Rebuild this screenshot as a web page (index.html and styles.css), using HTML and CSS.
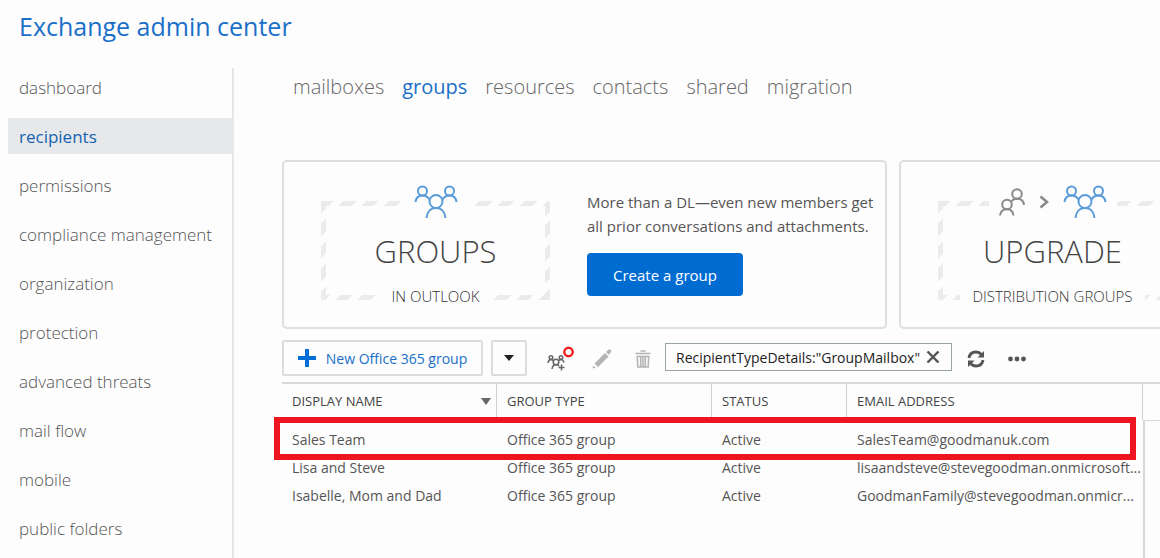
FILE: index.html
```html
<!DOCTYPE html>
<html lang="en">
  <head>
    <meta charset="utf-8">
    <title>Exchange admin center</title>
    <link rel="stylesheet" href="styles.css">
  </head>
  <body>
    <svg class="defs" width="0" height="0">
      <symbol id="people" viewBox="0 0 44 34">
        <g fill="none" stroke="currentColor" stroke-width="2">
          <circle cx="8.500" cy="6" r="4.500"/>
          <circle cx="35.500" cy="6" r="4.500"/>
          <circle cx="22" cy="16.500" r="6.500"/>
          <path d="M1.500 17c.5-4 3-6.500 7-6.500 3 0 5.500 1.500 7 4M42.500 17c-.5-4-3-6.500-7-6.500-3 0-5.500 1.500-7 4M12.500 33c.5-6 4-10 9.500-10s9 4 9.500 10"/>
        </g>
      </symbol>
      <symbol id="pair" viewBox="0 0 26 28">
        <g fill="none" stroke="currentColor" stroke-width="2">
          <circle cx="18" cy="6" r="4.800"/>
          <circle cx="8" cy="16.500" r="4.800"/>
          <path d="M12.500 13c1.500-1.500 3-2.200 5.500-2.200 4 0 6.500 2 7 6M1 27.500c.5-4 3-6.200 7-6.200s6 2.200 6.500 6.200"/>
        </g>
      </symbol>
    </svg>

    <h1 class="title">Exchange admin center</h1>
    <div class="page">
      <nav class="sidebar">
        <a href="#">dashboard</a>
        <a href="#" class="selected">recipients</a>
        <a href="#">permissions</a>
        <a href="#">compliance management</a>
        <a href="#">organization</a>
        <a href="#">protection</a>
        <a href="#">advanced threats</a>
        <a href="#">mail flow</a>
        <a href="#">mobile</a>
        <a href="#">public folders</a>
      </nav>

      <div class="main">
        <nav class="tabs">
          <a href="#">mailboxes</a>
          <a href="#" class="selected">groups</a>
          <a href="#">resources</a>
          <a href="#">contacts</a>
          <a href="#">shared</a>
          <a href="#">migration</a>
        </nav>

        <div class="cards">
          <div class="card">
            <div class="stamp">
              <div class="stamp-body">
                <div class="stamp-icons">
                  <svg width="44" height="34"><use href="#people"/></svg>
                </div>
                <h2>GROUPS</h2>
                <p class="stamp-label">IN OUTLOOK</p>
              </div>
            </div>
            <div class="card-text">
              <p>More than a DL&mdash;even new members get<br>all prior conversations and attachments.</p>
              <button class="create">Create a group</button>
            </div>
          </div>
          <div class="card">
            <div class="stamp">
              <div class="stamp-body">
                <div class="stamp-icons">
                  <svg class="gray" width="26" height="28"><use href="#pair"/></svg>
                  <svg class="gray" width="10" height="14" viewBox="0 0 10 14"><path d="M1.500 1.500L8 7l-6.500 5.500" fill="none" stroke="currentColor" stroke-width="2.500"/></svg>
                  <svg width="44" height="34"><use href="#people"/></svg>
                </div>
                <h2>UPGRADE</h2>
                <p class="stamp-label">DISTRIBUTION GROUPS</p>
              </div>
            </div>
          </div>
        </div>

        <div class="toolbar">
          <button class="new">
            <svg width="18" height="18" viewBox="0 0 18 18"><path d="M9 0v18M0 9h18" stroke="#0070d8" stroke-width="4"/></svg>
            New Office 365 group
          </button>
          <button class="more-new" aria-label="More group types">
            <svg width="10" height="6" viewBox="0 0 10 6"><path d="M0 0h10L5 6z" fill="#222"/></svg>
          </button>
          <button class="icon" aria-label="Upgrade">
            <svg width="28" height="26" viewBox="0 0 28 26">
              <g fill="none" stroke="#666" stroke-width="1.500">
                <circle cx="4" cy="11.500" r="1.800"/>
                <circle cx="14" cy="11.500" r="1.800"/>
                <circle cx="9" cy="16" r="2.800"/>
                <path d="M1 17c.3-2 1.200-3.500 3-3.500l2 .8M12 14.300l2-.8c1.500 0 2.500 1.300 3 3M5 23c.3-3 1.500-4.200 4-4.200 1.500 0 2.500.4 3 1.200M14.500 18.500v6M11.500 21.500h6"/>
              </g>
              <circle cx="21.500" cy="6" r="4.200" fill="#fff" stroke="#f01e1e" stroke-width="2.400"/>
            </svg>
          </button>
          <button class="icon" aria-label="Edit">
            <svg width="20" height="20" viewBox="0 0 20 20" fill="#b4b4b4"><path d="M.5 19.500l.8-3 2.200 2.200zM2.500 14.500L13 4l3.500 3.500L6 18zM14 3l2-2c1-1 2-.7 2.700 0s1 1.700 0 2.700l-2 2z"/></svg>
          </button>
          <button class="icon" aria-label="Delete">
            <svg width="16" height="18" viewBox="0 0 16 18"><g fill="none" stroke="#b4b4b4" stroke-width="1.600"><path d="M.5 3.500h15M5.500 1h5M2.300 6.500h11.400l-.5 10.500H2.800zM5.700 7v10M8 7v10M10.300 7v10"/></g></svg>
          </button>
          <div class="search">
            <input type="text" aria-label="Search" value='RecipientTypeDetails:"GroupMailbox"'>
            <button aria-label="Clear search">
              <svg width="14" height="12" viewBox="0 0 14 12"><path d="M1.500.5l11 11M12.500.5l-11 11" stroke="#555" stroke-width="2.400"/></svg>
            </button>
          </div>
          <button class="icon" aria-label="Refresh">
            <svg width="18" height="18" viewBox="0 0 18 18">
              <path d="M2 8c.5-3.500 3-6 7-6 2.500 0 4 .8 5.500 2.500M16 10c-.5 3.500-3 6-7 6-2.500 0-4-.8-5.500-2.500" fill="none" stroke="#555" stroke-width="2.800"/>
              <path d="M17 1v6.500h-6.500zM1 17v-6.500h6.500z" fill="#555"/>
            </svg>
          </button>
          <button class="icon" aria-label="More">
            <svg width="18" height="6" viewBox="0 0 18 6" fill="#555"><circle cx="2.500" cy="3" r="2.400"/><circle cx="9" cy="3" r="2.400"/><circle cx="15.500" cy="3" r="2.400"/></svg>
          </button>
        </div>

        <div class="results">
          <table class="list">
            <thead>
              <tr>
                <th class="name">DISPLAY NAME <svg width="10" height="7" viewBox="0 0 10 7"><path d="M0 0h10L5 7z" fill="#666"/></svg></th>
                <th class="type">GROUP TYPE</th>
                <th class="status">STATUS</th>
                <th>EMAIL ADDRESS</th>
              </tr>
            </thead>
            <tbody>
              <tr><td>Sales Team</td><td>Office 365 group</td><td>Active</td><td>SalesTeam@goodmanuk.com</td></tr>
              <tr><td>Lisa and Steve</td><td>Office 365 group</td><td>Active</td><td>lisaandsteve@stevegoodman.onmicrosoft...</td></tr>
              <tr><td>Isabelle, Mom and Dad</td><td>Office 365 group</td><td>Active</td><td>GoodmanFamily@stevegoodman.onmicr...</td></tr>
            </tbody>
          </table>
          <div class="details"></div>
          <div class="highlight"></div>
        </div>
      </div>
    </div>
  </body>
</html>
```
FILE: styles.css
```css
* {
  box-sizing: border-box;
}

body {
  margin: 0;
  height: 100vh;
  display: flex;
  flex-direction: column;
  overflow: hidden;
  background-color: #fdfdfd;
  font-family: "Open Sans", "Noto Sans", sans-serif;
  font-size: 14px;
  color: #555;
}

h1, h2, p {
  margin: 0;
  font-weight: normal;
}

a {
  text-decoration: none;
  color: inherit;
}

button, input {
  font: inherit;
  color: inherit;
}

button {
  padding: 0;
  cursor: pointer;
}

svg {
  display: block;
}

.defs {
  position: absolute;
}

.title {
  flex: none;
  height: 68px;
  padding: 8px 19px;
  font-size: 25px;
  line-height: 36px;
  color: #1a6fc9;
}

.page {
  flex: 1;
  display: flex;
  min-height: 0;
}

/* left menu */
.sidebar {
  flex: none;
  width: 226px;
  margin-left: 8px;
  padding-top: 1px;
  border-right: 2px solid #e6e6e6;
  display: flex;
  flex-direction: column;
  gap: 13px;
}

.sidebar a {
  flex: none;
  padding: 2px 0 0 11px;
  margin-right: -2px;
  font-size: 17px;
  line-height: 34px;
  font-weight: 300;
}

.sidebar a.selected {
  background-color: #e7e8ea;
  color: #1463b0;
  font-weight: normal;
}

.main {
  flex: 1;
  min-width: 0;
  padding-left: 48px;
  display: flex;
  flex-direction: column;
}

.tabs {
  display: flex;
  gap: 18px;
  padding: 2px 0 0 11px;
  font-size: 20px;
  line-height: 34px;
  font-weight: 300;
  color: #666;
}

.tabs a.selected {
  color: #1a6fc9;
  font-weight: normal;
}

/* promo cards */
.cards {
  display: flex;
  gap: 12px;
  margin-top: 56px;
  overflow: hidden;
}

.card {
  flex: none;
  display: flex;
  gap: 37px;
  width: 605px;
  height: 169px;
  padding: 39px 0 0 37px;
  border: 2px solid #dedede;
  border-radius: 5px;
}

.stamp {
  width: 229px;
  height: 99px;
  padding: 5px;
  background: repeating-linear-gradient(135deg, #eaecec 0, #eaecec 9px, #fdfdfd 9px, #fdfdfd 16px);
}

.stamp-body {
  display: flex;
  flex-direction: column;
  align-items: center;
  height: 89px;
  background-color: #fdfdfd;
}

.stamp-icons {
  display: flex;
  align-items: center;
  gap: 14px;
  margin-top: -21px;
  padding: 0 10px;
  background-color: #fdfdfd;
  color: #5b9bd8;
}

.stamp-icons .gray {
  color: #888;
}

.stamp h2 {
  margin-top: 9px;
  font-size: 31px;
  line-height: 46px;
  font-weight: 300;
  color: #444;
}

.stamp-label {
  margin-top: 12px;
  padding: 0 12px;
  background-color: #fdfdfd;
  font-size: 15px;
  line-height: 20px;
  font-weight: 300;
  color: #333;
  white-space: nowrap;
}

.card-text {
  margin-top: -11px;
  font-size: 15px;
  line-height: 24px;
  font-weight: 300;
  white-space: nowrap;
}

.create {
  width: 156px;
  height: 43px;
  margin-top: 15px;
  border: none;
  border-radius: 4px;
  background-color: #006cd2;
  color: white;
  font-weight: normal;
}

/* toolbar */
.toolbar {
  display: flex;
  align-items: center;
  margin-top: 11px;
}

.new, .more-new {
  display: flex;
  align-items: center;
  justify-content: center;
  height: 36px;
  border: 2px solid #dadddf;
  border-radius: 2px;
  background-color: #fdfdfd;
}

.new {
  gap: 10px;
  width: 201px;
  color: #1a6fc9;
}

.more-new {
  width: 36px;
  margin: 0 15px 0 8px;
}

.icon {
  display: flex;
  justify-content: center;
  width: 28px;
  margin: 2px 8px 0 5px;
  border: none;
  background: none;
}

.search {
  display: flex;
  align-items: center;
  width: 287px;
  height: 28px;
  margin: 0 5px 2px 0;
  border: 1px solid #98a3a8;
}

.search input {
  flex: 1;
  min-width: 0;
  padding: 0 0 0 10px;
  border: none;
  outline: none;
  background: none;
  color: #222;
}

.search button {
  margin-right: 11px;
  border: none;
  background: none;
}

/* list of groups */
.results {
  position: relative;
  flex: 1;
  display: flex;
  align-items: flex-start;
  margin-top: 6px;
  border-top: 2px solid #d5d9dc;
}

.list {
  flex: 1;
  min-width: 0;
  table-layout: fixed;
  border-collapse: separate;
  border-spacing: 0;
}

.list th {
  height: 36px;
  padding: 0 0 2px 10px;
  border-right: 1px solid #ccd2d4;
  text-align: left;
  font-size: 13px;
  font-weight: normal;
  color: #444;
}

.list th svg {
  float: right;
  margin: 6px 5px 0 0;
}

.list .name, .list .type {
  width: 215px;
}

.list .status {
  width: 135px;
}

.list td {
  height: 28px;
  padding: 0 0 0 10px;
  white-space: nowrap;
}

.list tbody::before {
  content: "";
  display: block;
  height: 5px;
}

.details {
  align-self: stretch;
  width: 17px;
  margin-top: 36px;
  border-top: 1px solid #d5d9dc;
  border-left: 2px solid #d5d9dc;
}

/* red frame round the first row */
.highlight {
  position: absolute;
  top: 33px;
  left: -8px;
  right: 24px;
  height: 43px;
  border: 6px solid #ed1620;
}
```
